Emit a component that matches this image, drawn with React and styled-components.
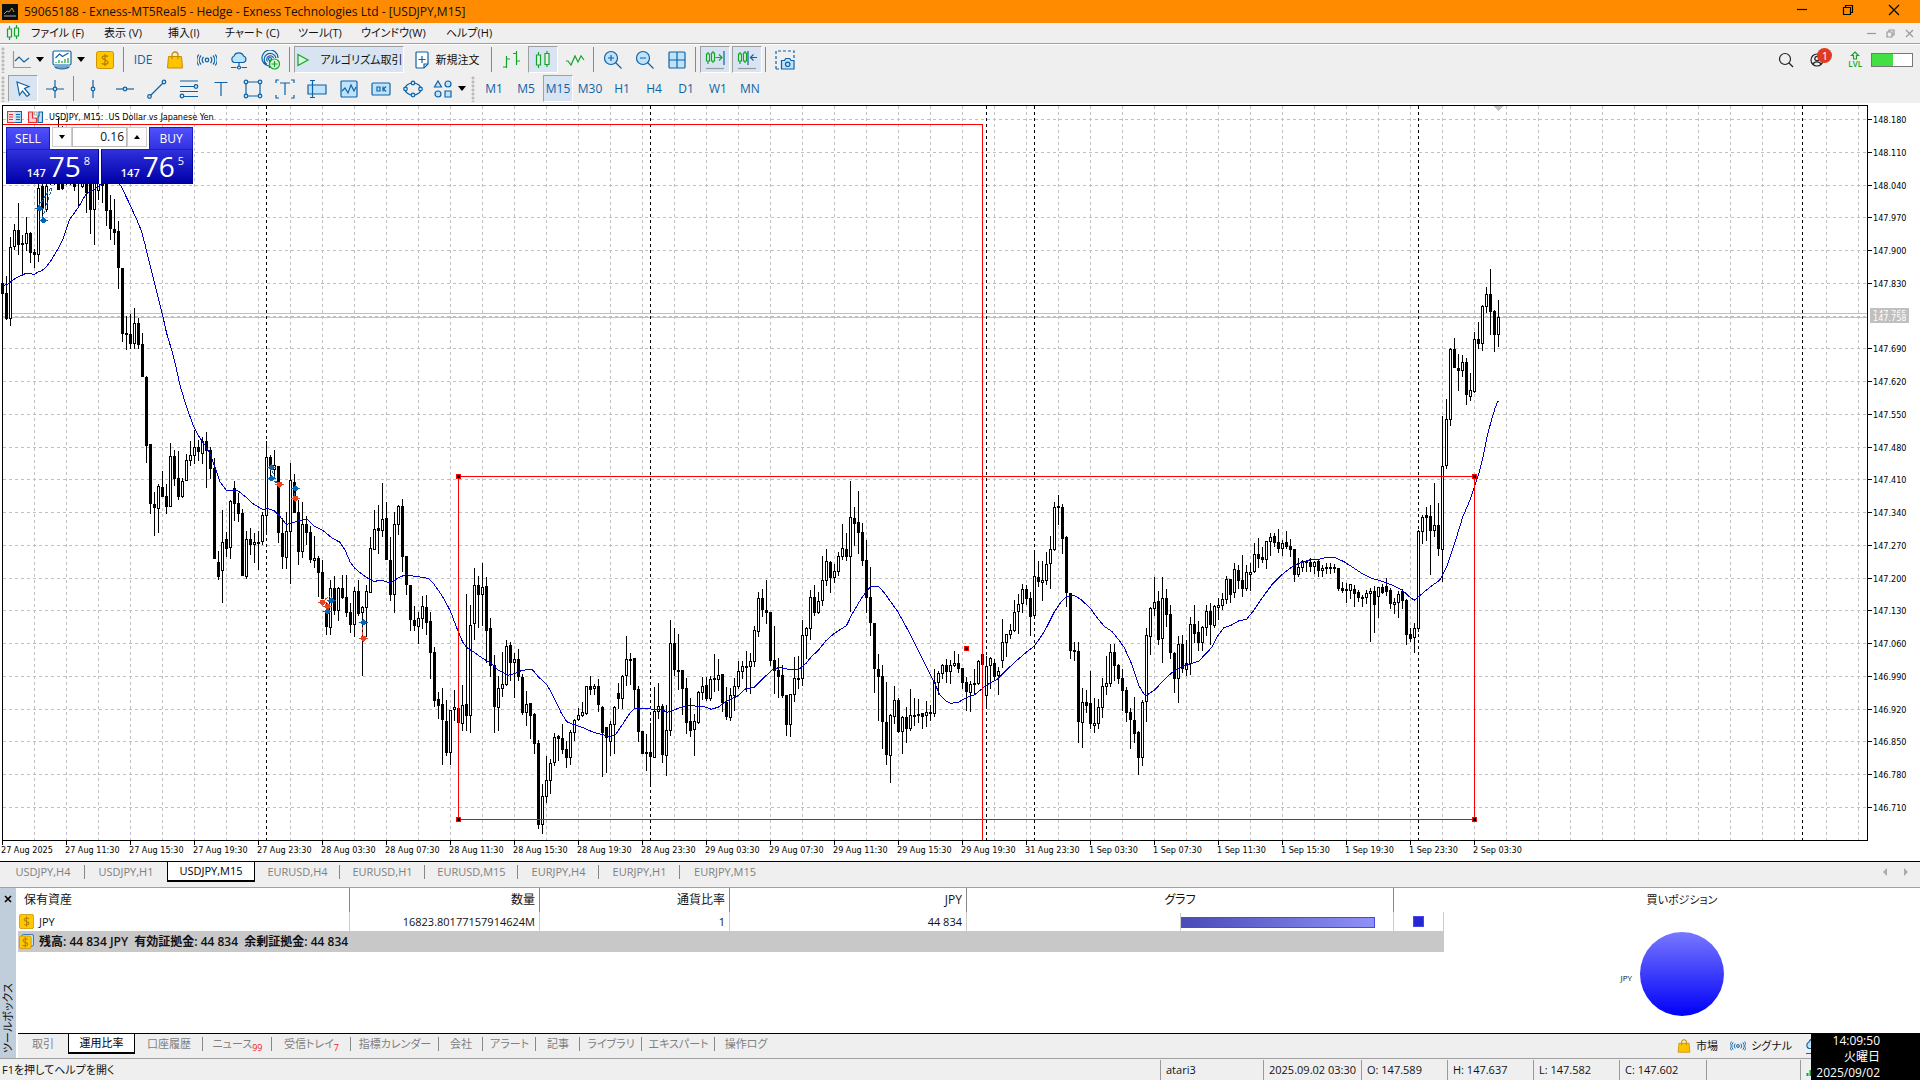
import { useState } from "react"
import styled, { createGlobalStyle, css } from "styled-components"

const BLUE = "#0f62a5"
const SKY = "#bfe3fb"
const GREEN = "#12a52b"

// ---------- chart data ----------
// every bar is high, open, close, low, in thirds of a unit under "base"; one bar each 4 units
const SERIES = [
    { from: 0, base: 180, bars: `292 310 340 340|288 340 415 418|173 415 202 437|132 200 151 208|69 151 193 223|166 189 193 285|112 191 160 212|157 160 217 248|207 216 223 263|-15 223 25 244|0 20 82 118|-20 88 18 95|-90 10 -60 14|-150 -60 0 14|-184 -100 27 28|-160 -20 25 28|-150 0 -80 12|-140 -80 0 12|-150 -10 18 32|-90 -40 10 80|-120 18 -50 23|-90 -50 38 98|-80 -30 88 160|-60 88 0 194|-60 30 -10 57|-60 -10 15 68|-30 -10 92 137|45 90 146 178|57 147 157 194|123 154 263 326|265 265 461 485|408 459 464 509|402 463 491 506|384 491 430 506|416 430 494 506|459 493 590 590|588 591 797 848|793 793 971 1001|938 973 983 1067|912 986 919 1058|873 921 950 950|912 948 980 1001|789 980 829 980|812 829 896 917|815 895 949 957|895 949 904 953|822 901 841 901|785 841 826 857|752 826 802 851|781 802 814 842|773 820 784 850|757 783 811 923|801 811 866 895|835 865 1136 1136|1113 1147 1190 1199|990 1171 1087 1268|1056 1077 1106 1128|960 1103 964 1136|903 925 970 1020|940 969 1000 1025|988 1000 1187 1187|1053 1190 1078 1196|1045 1077 1094 1124|1061 1094 1087 1148|1053 1086 1088 1169|997 1085 1006 1094|783 1006 832 1060|826 832 862 900|810 868 856 890|858 859 1058 1088|1014 1060 1130 1166|996 1132 1054 1166|850 1054 901 1211|882 906 997 997|960 997 1115 1154|966 1115 1033 1133|1008 1033 1058 1094|1040 1057 1139 1148|1068 1141 1136 1162|1128 1135 1178 1250|1142 1176 1256 1256|1270 1300 1340 1364|1200 1343 1225 1364|1190 1225 1292 1302|1222 1290 1225 1320|1186 1225 1253 1256|1185 1252 1298 1308|1270 1298 1334 1358|1221 1334 1234 1370|1200 1234 1301 1307|1278 1298 1282 1485|1215 1283 1234 1370|1072 1238 1105 1238|990 1108 1048 1108|975 1045 1052 1121|909 1052 1018 1070|966 1015 1139 1139|1072 1141 1244 1260|996 1244 1033 1296|975 1033 979 1064|957 979 1130 1175|1128 1128 1214 1242|1215 1215 1319 1352|1279 1320 1337 1352|1297 1340 1315 1389|1249 1315 1279 1344|1246 1282 1328 1364|1297 1324 1418 1496|1401 1416 1560 1580|1536 1558 1577 1615` },
    { from: 110, base: 460, bars: `685 733 779 912|720 783 878 885|751 878 751 912|690 748 742 782|715 744 788 790|676 791 736 812|402 732 767 812|435 767 496 818|324 490 376 537|348 376 402 503|309 404 382 495|351 378 512 606|474 504 617 650|585 616 740 818|648 742 685 812|577 685 673 708|541 673 559 675|546 556 608 662|579 608 598 713|567 598 650 662|642 652 758 762|693 758 733 795|729 730 765 834|759 763 849 879|840 850 1094 1106|973 1094 1009 1121|888 1009 961 1028|897 961 910 1001|819 907 832 917|825 829 836 902|793 836 868 879|843 867 893 921|810 892 817 912|779 817 782 840|745 778 766 780|728 767 757 770|678 760 679 762|648 679 688 703|672 686 679 704|657 679 734 753|740 741 818 948|802 802 833 938|784 845 793 887|738 793 742 881|670 699 716 746|646 716 649 746|528 646 598 676|579 598 602 672|594 595 688 745|678 688 814 843|813 813 880 881|823 876 878 930|790 877 889 977|682 892 754 892|669 754 739 775|733 739 884 908|736 886 811 945|480 811 550 825|504 550 629 645|522 630 632 688|631 631 686 762|656 685 788 819|714 784 811 830|763 808 784 885|693 788 697 790|651 697 679 717|651 676 716 720|648 716 658 722|582 655 658 693|598 658 646 690|643 643 727 754|681 726 769 777|684 773 706 780|654 706 679 750|604 679 634 684|603 634 619 656|574 619 622 695|580 619 604 699|499 605 511 618|396 513 415 528|388 415 448 468|360 450 457 489|456 458 602 615|499 600 631 699|594 631 649 712|615 646 706 712|705 705 794 825|702 794 703 828|591 703 655 724|589 655 657 684|480 656 526 675|501 526 505 594|390 506 412 537|375 412 458 465|396 458 424 459|289 422 361 437|267 361 304 375|304 306 352 398|312 352 334 366|276 334 290 345|192 290 265 297|219 268 289 302|63 290 172 453|141 175 191 255|93 187 218 280|189 217 300 315|240 301 412 456|321 412 488 525|490 490 626 696|582 628 649 780|615 649 785 864|667 787 884 912|762 886 766 966|678 769 721 789|714 720 815 818|768 815 772 879|742 772 806 846|687 806 766 812|714 766 768 795|717 763 767 788|759 760 770 806|723 767 757 800|735 758 761 782|627 761 667 768|633 668 640 702|612 640 616 656|598 616 635 668|600 635 616 669|573 616 610 620|582 610 626 638|625 625 668 684|652 667 695 750|663 697 673 753|627 670 673 703|600 671 604 673|582 583 613 613|588 706 619 741|592 617 595 684|598 610 648 662|621 647 634 702|477 601 547 621|522 547 523 588|492 523 511 535|421 511 457 513|402 454 433 520|373 430 388 457|375 387 416 434|397 415 469 525|280 466 349 468|303 351 365 378|303 368 361 420|276 361 313 372|228 310 268 384|126 268 142 272|105 140 143 194|132 142 235 280|228 232 398 440|400 400 571 594|546 571 574 600|546 574 785 846|684 787 727 861|690 727 737 758|633 730 791 804|714 796 790 816|718 790 742 804|654 742 679 771|589 679 671 703|552 671 577 678|552 577 616 662|612 616 656 670|627 655 692 750|682 692 758 785|744 757 779 864|711 781 821 846|813 816 892 942|720 892 727 915|504 724 526 785|441 529 445 582|351 445 427 465|393 423 538 552|351 535 415 606|387 415 463 498|435 463 577 594|578 580 655 696|528 655 553 726|525 553 626 636|541 628 610 645|471 610 493 644|435 493 521 546|483 517 547 570|498 547 502 570|435 501 454 526|430 454 494 552|435 496 439 501|414 442 436 478|399 436 418 448|349 418 358 430|357 358 402 426|309 398 328 412|316 330 360 384|285 360 386 408|316 386 337 392|309 343 337 392|249 334 283 336|234 283 296 321|261 292 299 306|243 299 245 326|220 245 233 285|219 229 248 258|207 247 265 278|240 265 250 285|213 247 260 264|237 259 269 290|268 268 343 363|294 343 322 350|300 322 304 335|300 304 308 333|294 306 320 334|304 320 307 340|300 304 332 348|315 331 325 348|311 323 326 340|311 323 326 340|314 323 326 338|324 324 386 390|366 385 391 396|370 388 392 426|373 391 374 414|375 388 400 438|390 398 412 424|406 411 413 438|391 412 400 431|384 400 394 543|378 394 434 516|381 409 382 471|372 382 398 399|354 378 394 406|385 391 431 444|414 433 427 460|394 428 403 471|387 394 422 444|417 420 524 552|504 522 536 544|489 532 506 576|211 506 214 514|165 214 172 249|141 166 172 242|135 168 212 342|69 212 196 230|129 196 266 285` },
    { from: 360, base: 100, bars: `950 1348 1099 1445|897 1096 958 1106|746 958 748 977|714 748 803 803|762 804 812 872|765 812 787 830|774 787 884 914|820 890 871 900|697 875 718 878|666 717 731 744|615 731 619 752|561 620 583 638|507 583 635 702|630 633 704 755|600 704 652 738` },
]

const CANDLES = SERIES.flatMap(({ from, base, bars }) =>
    bars.split("|").map((bar, i) => {
        const [high, open, close, low] = bar.split(" ").map((v) => Math.floor(base + Number(v) / 3))
        return { x: 2 + 4 * (from + i), high, open, close, low }
    })
)

// moving average, same idea: origin, horizontal scale, then x,y pairs
const AVERAGE = [
    { x: 0, y: 180, k: 3, pts: "10,317 22,313 35,303 50,293 65,286 78,280 103,283 115,276 127,271 140,259 152,243 163,225 175,205 187,182 197,152 207,122 215,110 235,82 258,42 280,30 295,20 315,0 335,-10 350,0 364,20 388,70 412,123 425,155 436,197 446,240 460,295 487,402 500,460 515,510 530,570 541,620 560,682 580,737 595,767 618,800 632,825 645,862 660,905 679,931 712,931 740,953 760,972 787,988 805,986 823,992 840,1010 859,1033 880,1028 900,1021 921,1018 945,1040 967,1050 995,1073 1020,1087 1035,1110 1050,1145 1065,1165 1085,1182 1104,1195 1122,1204 1145,1201 1172,1209 1195,1193 1218,1184 1240,1188 1285,1195 1300,1210" },
    { x: 440, y: 460, k: 2.8, pts: "0,398 10,415 29,453 51,515 63,545 74,562 96,577 119,595 141,608 160,628 190,646 208,641 230,631 258,628 275,650 300,675 320,715 340,760 355,785 375,794 400,803 430,817 455,824 475,830 490,826 510,795 530,762 545,746 590,747 620,748 635,757 660,748 690,736 740,740 760,748 780,741 800,725 835,707 855,687 880,682 905,655 930,630 950,622 975,628 1005,628 1025,610 1040,590 1060,570 1080,543 1104,520 1138,497 1155,460 1180,415 1205,380 1228,379 1245,400 1283,457 1310,510 1345,585 1385,670 1400,705 1415,722 1430,730 1452,727" },
    { x: 960, y: 460, k: 2.8, pts: "0,724 20,712 40,705 75,675 105,657 130,630 158,602 190,573 208,558 230,525 245,497 262,460 280,430 298,410 320,406 340,420 365,445 385,475 405,500 425,514 445,540 460,563 480,610 500,675 515,702 522,706 545,690 575,655 600,632 625,618 668,604 685,585 705,562 720,530 738,504 760,495 780,483 803,477 820,455 845,415 875,372 900,345 935,316 960,306 985,298 1005,298 1028,292 1052,294 1075,305 1100,322 1125,340 1150,354 1170,360 1205,373 1238,390 1255,407 1272,421 1295,400 1320,378 1343,361 1362,322 1385,250 1408,170 1430,115" },
    { x: 1410, y: 100, k: 3, pts: "190,1170 208,1115 217,1080 230,1015 243,965 255,925 262,907 266,903" },
]
const AVERAGE_POINTS = AVERAGE.map(({ x, y, k, pts }) =>
    pts.split(" ").map((p) => {
        const [px, py] = p.split(",").map(Number)
        return `${x + px / k},${y + py / 3}`
    }).join(" ")
).join(" ")

const PRICES = Array.from({ length: 22 }, (_, i) => ({
    y: Math.round(119 + i * 32.76),
    label: (148.18 - i * 0.07).toFixed(3),
}))
const TIMES = ["27 Aug 2025", "27 Aug 11:30", "27 Aug 15:30", "27 Aug 19:30", "27 Aug 23:30", "28 Aug 03:30", "28 Aug 07:30", "28 Aug 11:30", "28 Aug 15:30", "28 Aug 19:30", "28 Aug 23:30", "29 Aug 03:30", "29 Aug 07:30", "29 Aug 11:30", "29 Aug 15:30", "29 Aug 19:30", "31 Aug 23:30", "1 Sep 03:30", "1 Sep 07:30", "1 Sep 11:30", "1 Sep 15:30", "1 Sep 19:30", "1 Sep 23:30", "2 Sep 03:30"]
const DAY_BREAKS = [266, 650, 986, 1034, 1418, 1802]
const HANDLES = [[458, 476], [1474, 476], [458, 819], [1474, 819], [966, 648]]
const DEALS = [[38, 208, "buy"], [42, 220, "buy"], [270, 467, "buy"], [270, 478, "buy"], [278, 484, "sell"], [294, 488, "buy"], [294, 498, "sell"], [321, 602, "sell"], [326, 606, "sell"], [326, 611, "buy"], [330, 600, "buy"], [362, 622, "buy"], [362, 638, "sell"]]
const DEAL_LINES = [[38, 207, 52, 186, "buy"], [42, 219, 52, 188, "buy"], [270, 467, 278, 484, "buy"], [270, 478, 278, 484, "buy"], [294, 488, 294, 498, "buy"], [321, 602, 330, 596, "sell"], [326, 606, 330, 598, "sell"], [362, 622, 362, 638, "sell"]]

const Chart = () => (
    <ChartSvg viewBox="0 103 1920 758" shapeRendering="crispEdges" role="img" aria-label="USDJPY M15">
        <g stroke="#c0c0c0" strokeDasharray="3 3">
            {PRICES.map((p) => <path key={p.y} d={`M3 ${p.y}.5H1867`} />)}
            {Array.from({ length: 58 }, (_, i) => <path key={i} d={`M${34 + i * 32}.5 106V840`} />)}
        </g>
        <path d="M3 313.5H1867M3 317.5H1867" stroke="#c0c0c0" />
        <g stroke="#000" strokeDasharray="3 3">
            {DAY_BREAKS.map((x) => <path key={x} d={`M${x}.5 106V840`} />)}
        </g>
        {CANDLES.map(({ x, high, open, close, low }) => (
            <g key={x} stroke="#000">
                <path d={`M${x}.5 ${high}V${low + 1}`} />
                {open > close
                    ? <rect x={x - 0.5} y={close + 0.5} width="2" height={Math.max(1, open - close)} fill="#fff" />
                    : <rect x={x - 0.5} y={open + 0.5} width="2" height={Math.max(1, close - open)} fill="#000" />}
            </g>
        ))}
        {DEAL_LINES.map(([x1, y1, x2, y2, kind], i) => (
            <path key={i} d={`M${x1} ${y1}L${x2} ${y2}`} stroke={kind === "buy" ? "#0a64b4" : "#e4461f"} strokeDasharray="3 2" />
        ))}
        <polyline points={AVERAGE_POINTS} fill="none" stroke="#0000c8" />
        <path d="M3 124.5H982.5V840M458.5 476.5H1474.5V819.5H458.5Z" fill="none" stroke="#f00" />
        {HANDLES.map(([x, y]) => <rect key={`${x}-${y}`} x={x - 1.5} y={y - 1.5} width="4" height="4" fill="#000" stroke="#f00" />)}
        {DEALS.map(([x, y, kind], i) => kind === "buy"
            ? <path key={i} d={`M${x - 3} ${y}h2v-1h1v-1h1v-1h1v1h1v1h1v1h2v1h-2v1h-1v1h-3v-1h-1v-1h-2z`} fill="#0a64b4" />
            : <path key={i} d={`M${x - 3} ${y}h2v-2h5v2h2v1h-2v1h-1v1h-1v1h-1v-1h-1v-1h-1v-1h-2z`} fill="#e4461f" />)}
        <path d="M1493 106h10l-5 5z" fill="#c0c0c0" />
        <path d="M2.5 840V105.5H1867.5V840.5H2" fill="none" stroke="#000" />
        <AxisText>
            {PRICES.map((p) => p.label !== "147.760" && (
                <g key={p.label}>
                    <path d={`M1868 ${p.y}.5h4`} stroke="#000" />
                    <text x="1873" y={p.y + 4}>{p.label}</text>
                </g>
            ))}
            {TIMES.map((t, i) => (
                <g key={t}>
                    <path d={`M${2 + i * 64}.5 841v4`} stroke="#000" />
                    <text x={1 + i * 64} y="853">{t}</text>
                </g>
            ))}
            <rect x="1870" y="308" width="39" height="15" fill="#c0c0c0" />
            <text x="1873" y="317" fill="#fff">147.765</text>
            <rect x="1870" y="313" width="39" height="10" fill="#c0c0c0" />
            <text x="1873" y="321" fill="#fff">147.758</text>
        </AxisText>
    </ChartSvg>
)

// ---------- icons ----------
const Icon = ({ w = 20, h = 20, c = BLUE, children }) => (
    <svg width={w} height={h} viewBox={`0 0 ${w} ${h}`} fill="none" stroke={c} strokeWidth="1.2" aria-hidden="true">{children}</svg>
)
const Dot = ({ x, y }) => <circle cx={x} cy={y} r="1.8" fill={SKY} />
const Caret = () => <Icon w={8} h={5} c="none"><path d="M0 0h8L4 5z" fill="#000" /></Icon>
const BagIcon = ({ s = 18 }) => (
    <svg width={s} height={s} viewBox="0 0 18 18" fill="#ffc400" stroke="#c88c00" aria-hidden="true">
        <path d="M2.500 5.500h13l1 11.500h-15z" /><path d="M6 8V4a3 3 0 0 1 6 0v4" fill="none" strokeWidth="1.300" />
    </svg>
)
const SignalIcon = ({ s = 20 }) => (
    <svg width={s} height={s} viewBox="0 0 20 20" fill="none" stroke={BLUE} strokeWidth="1.2" aria-hidden="true">
        <circle cx="10" cy="10" r="1.800" fill={SKY} />
        <path d="M6.500 7a4.500 4.500 0 0 0 0 6M13.500 7a4.500 4.500 0 0 1 0 6M4 5.500a7 7 0 0 0 0 9M16 5.500a7 7 0 0 1 0 9M1.800 4.500a9 9 0 0 0 0 11M18.200 4.500a9 9 0 0 1 0 11" />
    </svg>
)
const CloudIcon = () => (
    <Icon>
        <path d="M5 12.500a3.500 3.500 0 0 1 0-6.500 5 4.500 0 0 1 9.500 0 3.400 3.400 0 0 1 0 6.500z" fill={SKY} />
        <path d="M10 12.500v4M2 17.500h5.500M12.500 17.500h5.500" /><circle cx="10" cy="17.500" r="1.500" />
    </Icon>
)
const CoinIcon = ({ stack, s = 18 }) => (
    <svg width={s} height={s} viewBox="0 0 18 18" aria-hidden="true">
        {stack && <rect x="3.500" y=".5" width="14" height="14" rx="2" fill={SKY} stroke={BLUE} />}
        <rect x=".5" y={stack ? 2.5 : 0.5} width={stack ? 14 : 17} height={stack ? 15 : 17} rx="2" fill="#ffc800" stroke="#cf9400" />
        <path d="M12 5.500C11 4.500 6.200 4.200 6.200 6.800S12 8.600 12 11.200 7 13.600 5.800 12.300M9 3v12" transform={stack ? "translate(-1.500 1)" : undefined} fill="none" stroke="#b47d00" strokeWidth="1.300" />
    </svg>
)
const ZoomIcon = ({ plus }) => (
    <Icon><circle cx="8" cy="8" r="6.500" fill={SKY} /><path d={plus ? "M12.500 12.500l6 6M5 8h6M8 5v6" : "M12.500 12.500l6 6M5 8h6"} /></Icon>
)
const candlesArt = <><path d="M5.500 2v16M14 1v16" /><path d="M3.500 5h4v10h-4zM12 3.500h4v11h-4z" fill="#efefef" /></>

const ROW_ONE = [
    { id: "line", wide: true, art: <Icon c="#9a9a9a"><path d="M2.500 1v16.500H20" /><path d="M4 11l4-4 5 5 5-4" stroke={BLUE} /></Icon> },
    { id: "indicators", wide: true, art: <Icon><rect x="1" y="1" width="18" height="14" rx="1.500" fill="#fff" /><path d="M3 17c2 2.500 12 2.500 14 0z" fill={SKY} /><path d="M3.500 8l4-4 3 2.500 6-3.500" /><path d="M4 13v-1M7 13v-3M10 13v-2M13 13v-4M16 13V8" stroke={GREEN} /></Icon> },
    { id: "coin", art: <CoinIcon /> },
    { sep: 1 },
    { id: "IDE", text: "IDE" },
    { id: "market", art: <BagIcon /> },
    { id: "signals", art: <SignalIcon /> },
    { id: "vps", art: <CloudIcon /> },
    { id: "copy", art: <Icon><path d="M8.500 9v9M13.700 14.500A8 8 0 1 1 17 8M6 14.500A6 6 0 1 1 15 8M6.500 11.500A3.500 3.500 0 1 1 12.500 8" /><circle cx="9" cy="9" r="1.500" fill={SKY} /><circle cx="13.500" cy="14" r="5" fill="#d8f5d8" stroke={GREEN} /><path d="M10.500 14h6M13.500 11v6" stroke={GREEN} /></Icon> },
    { sep: 1 },
    { id: "algo", width: 110, gap: 11, on: true, label: "アルゴリズム取引", art: <Icon w={14} h={14} c={GREEN}><path d="M2 1.500v11l10-5.500z" fill="#d8f8d8" /></Icon> },
    { id: "order", width: 82, gap: 7, label: "新規注文", art: <Icon w={14} h={18}><path d="M2 1h10a1 1 0 0 1 1 1v11l-4 4H2a1 1 0 0 1-1-1V2a1 1 0 0 1 1-1z" fill="#fff" /><path d="M7 5v7M3.500 8.500h7M9 17v-4h4" /></Icon> },
    { sep: 1 },
    { id: "bars", art: <Icon c={GREEN}><path d="M5.500 6v12M2 17h3.500M5.500 9H9M15.500 1v14M12 3.500h3.500M15.500 11H19" /></Icon> },
    { id: "candles", on: true, art: <Icon c={GREEN}>{candlesArt}</Icon> },
    { id: "zigzag", art: <Icon c={GREEN}><path d="M1 11h2l3 4 4-9 3 6 3-6 3 4" /></Icon> },
    { sep: 1 },
    { id: "in", art: <ZoomIcon plus /> },
    { id: "out", art: <ZoomIcon /> },
    { id: "tile", art: <Icon><rect x="2" y="2" width="16" height="16" rx="1" fill={SKY} /><path d="M10 2v16M2 10h16" /></Icon> },
    { sep: 1 },
    { id: "scroll", on: true, art: <Icon c={GREEN}><path d="M3 2v12M8 1v12M10.500 7.500h6M14 4.500l3 3-3 3" /><path d="M1.500 4h3v7h-3zM6.500 3h3v8h-3z" fill="#e0f0e0" /><path d="M19 1v14" stroke={BLUE} /><path d="M1 18.500h18" stroke="#999" /></Icon> },
    { id: "shift", on: true, art: <Icon c={GREEN}><path d="M3 2v12M8 1v12" /><path d="M1.500 4h3v7h-3zM6.500 3h3v8h-3z" fill="#e0f0e0" /><path d="M11 1v14M13.500 7.500H20M16.500 4.500l-3 3 3 3" stroke={BLUE} /><path d="M1 18.500h18" stroke="#999" /></Icon> },
    { sep: 1 },
    { id: "camera", art: <Icon><path d="M1 19V1h18v7M1 19h4" strokeDasharray="3 2" /><path d="M6.500 10.500h3l1.200-2h4l1.200 2H19v8.500H6.500z" fill={SKY} /><circle cx="12.700" cy="14.300" r="2.200" /></Icon> },
]

const ROW_TWO = [
    { id: "cursor", on: true, art: <Icon><path d="M4 3l12 4.500-4.500 2 5 6-2.500 2-4.500-5.500L6.500 16z" fill="#fff" /></Icon> },
    { id: "cross", art: <Icon><path d="M10 1v18M1 10h18" /><Dot x={10} y={10} /></Icon> },
    { sep: 1 },
    { id: "vline", art: <Icon><path d="M10 1v18" /><Dot x={10} y={10} /></Icon> },
    { id: "hline", art: <Icon><path d="M1 10h18" /><Dot x={10} y={10} /></Icon> },
    { id: "trend", art: <Icon><path d="M3 17L17 3" /><Dot x={2.5} y={17.5} /><Dot x={17} y={3} /></Icon> },
    { id: "fibo", art: <Icon><path d="M1 2h18M1 7.500h18M1 12.500h18M1 17.500h18" /><Dot x={17} y={7.5} /><Dot x={3} y={17} /></Icon> },
    { id: "text", art: <Icon><path d="M3.500 3.500h13M10 3.500V17" /></Icon> },
    { id: "rect", art: <Icon><path d="M3 3h14v14H3z" /><Dot x={3} y={3} /><Dot x={17} y={3} /><Dot x={3} y={17} /><Dot x={17} y={17} /></Icon> },
    { id: "label", art: <Icon><path d="M5 4h10M10 4v12M4 1H1v3M16 1h3v3M4 19H1v-3M16 19h3v-3" /></Icon> },
    { id: "edit", art: <Icon><path d="M1 6h18v9H1z" fill={SKY} /><path d="M5.500 2v16M3 1.500h5M3 18.500h5" /></Icon> },
    { id: "graph", art: <Icon><rect x="2" y="2" width="16" height="16" rx="1" fill={SKY} /><path d="M3 12l3-3 3 5 3-8 3 6 2-4" /></Icon> },
    { id: "button", art: <Icon><rect x="1" y="4" width="18" height="12" rx="1" fill={SKY} /><path d="M6 8h3v4H6zM12 7.500v5M15 7.500L12.500 10l2.500 2.500" /></Icon> },
    { id: "ellipse", art: <Icon><ellipse cx="10" cy="10" rx="8" ry="6" /><Dot x={2.5} y={10} /><Dot x={17.5} y={10} /><Dot x={10} y={4} /><Dot x={10} y={16} /></Icon> },
    { id: "shapes", wide: true, art: <Icon><g fill={SKY}><path d="M5 2L8.500 8h-7z" /><circle cx="15" cy="5" r="3" /><circle cx="5" cy="15" r="3" /><path d="M12 12h6v6h-6z" /></g></Icon> },
]
const FRAMES = ["M1", "M5", "M15", "M30", "H1", "H4", "D1", "W1", "MN"]

const MENUS = [["ファイル (F)", 73], ["表示 (V)", 64], ["挿入(I)", 57], ["チャート (C)", 73], ["ツール(T)", 63], ["ウインドウ(W)", 85], ["ヘルプ(H)", 68]]
const CHART_TABS = [["USDJPY,H4", 84], ["USDJPY,H1", 82], ["USDJPY,M15", 88], ["EURUSD,H4", 85], ["EURUSD,H1", 85], ["EURUSD,M15", 93], ["EURJPY,H4", 81], ["EURJPY,H1", 81], ["EURJPY,M15", 90]]
const BOX_TABS = [["取引", 50], ["運用比率", 67], ["口座履歴", 68], ["ニュース", 69, "99"], ["受信トレイ", 79, "7"], ["指標カレンダー", 88], ["会社", 44], ["アラート", 53], ["記事", 44], ["ライブラリ", 62], ["エキスパート", 73], ["操作ログ", 62]]

const Tools = ({ items }) => items.map((t, i) => t.sep
    ? <Divider key={i} />
    : (
        <Tool key={t.id} type="button" aria-label={t.label || t.id} $on={t.on} $gap={t.gap} $width={t.width || (t.wide ? 39 : 30)}>
            {t.art}{t.text}{t.wide && <Caret />}{t.label && <span>{t.label}</span>}
        </Tool>
    ))

const App = () => {
    const [frame, setFrame] = useState("M15")
    const [chartTab, setChartTab] = useState("USDJPY,M15")
    const [boxTab, setBoxTab] = useState("運用比率")
    const [lots, setLots] = useState("0.16")

    return <Page>
        <GlobalStyle />
        <TitleBar>
            <svg width="16" height="16" viewBox="0 0 16 16" aria-hidden="true"><path d="M0 0h16v16H0z" fill="#0b0f14" /><path d="M2 10l3-3 2 1 3-4 2 4" fill="none" stroke="#c9a227" /><path d="M2 12h12" stroke="#aaa" /></svg>
            <h1>59065188 - Exness-MT5Real5 - Hedge - Exness Technologies Ltd - [USDJPY,M15]</h1>
            <WindowButton type="button" aria-label="minimize"><Icon w={12} h={12} c="#000"><path d="M1 5.500h10" /></Icon></WindowButton>
            <WindowButton type="button" aria-label="restore"><Icon w={12} h={12} c="#000"><path d="M1.500 3.500h7v7h-7zM3.500 3V1.500h7v7H9" /></Icon></WindowButton>
            <WindowButton type="button" aria-label="close"><Icon w={12} h={12} c="#000"><path d="M1 1l10 10M11 1L1 11" /></Icon></WindowButton>
        </TitleBar>
        <MenuBar>
            <Icon w={14} h={16} c={GREEN}><path d="M3.500 1v14M10.500 0v14" /><path d="M1.500 4h4v8h-4zM8.500 3h4v8h-4z" fill="#efefef" /></Icon>
            {MENUS.map(([name, w]) => <MenuButton key={name} type="button" $width={w}>{name}</MenuButton>)}
            <ChildButtons>
                <Icon w={9} h={9} c="#999"><path d="M0 4.500h9" /></Icon>
                <Icon w={9} h={9} c="#999"><path d="M1 3h5v5H1zM3 3V1h5v5H6" /></Icon>
                <Icon w={9} h={9} c="#999"><path d="M1 1l7 7M8 1L1 8" /></Icon>
            </ChildButtons>
        </MenuBar>
        <ToolBars>
            <ToolRow>
                <Grip /><Tools items={ROW_ONE} />
                <RightTools>
                    <Icon w={16} h={16} c="#222"><circle cx="7" cy="7" r="5.500" /><path d="M11 11l4 4" /></Icon>
                    <UserBadge>
                        <Icon w={14} h={14} c="#222"><circle cx="7" cy="7" r="6" /><circle cx="7" cy="5.500" r="2.200" /><path d="M3 11.500c1-3.500 7-3.500 8 0" /></Icon>
                        <Badge>1</Badge>
                    </UserBadge>
                    <Level><Icon w={10} h={9} c={GREEN}><path d="M5 1l3.500 3.500H6.500V8h-3V4.500h-2z" /></Icon>LVL</Level>
                    <Battery><i /></Battery>
                </RightTools>
            </ToolRow>
            <ToolRow>
                <Grip /><Tools items={ROW_TWO} /><Grip $mid />
                {FRAMES.map((f) => <Tool key={f} type="button" $width={30} $on={f === frame} onClick={() => setFrame(f)}>{f}</Tool>)}
            </ToolRow>
        </ToolBars>

        <ChartArea>
            <Chart />
            <ChartCaption>
                <Icon w={15} h={12} c="#d33"><path d="M7.500.5h-7v11h7M2 3.500h4M2 6h4M2 8.500h4" fill="#fde0e0" /><path d="M7.500.5h7v11h-7M9 3.500h4M9 6h4M9 8.500h4" stroke={BLUE} fill={SKY} /></Icon>
                <Icon w={15} h={12} c="#d33"><path d="M.5 1v10.500h8V7h-4V1z" fill="#fcc" /><path d="M10 5v6.500h4.500V1H11v4z" stroke={BLUE} fill={SKY} /><path d="M6 1h3v3H6z" stroke="#aaa" /></Icon>
                <span>USDJPY, M15:&nbsp; US Dollar vs Japanese Yen</span>
            </ChartCaption>
            <OneClick>
                <Side type="button">SELL</Side>
                <Lots>
                    <button type="button" aria-label="less"><Icon w={6} h={4} c="none"><path d="M0 0h6L3 4z" fill="#000" /></Icon></button>
                    <input aria-label="volume" value={lots} onChange={(e) => setLots(e.target.value)} />
                    <button type="button" aria-label="more"><Icon w={6} h={4} c="none"><path d="M0 4h6L3 0z" fill="#000" /></Icon></button>
                </Lots>
                <Side type="button">BUY</Side>
                <Quote type="button"><small>147</small><b>75</b><sup>8</sup></Quote>
                <Quote type="button" $right><small>147</small><b>76</b><sup>5</sup></Quote>
            </OneClick>
        </ChartArea>

        <ChartTabs>
            {CHART_TABS.map(([name, w], i) => (
                <Tab key={name} type="button" $width={w} $on={name === chartTab} $line={i !== 1 && i !== 8} onClick={() => setChartTab(name)}>{name}</Tab>
            ))}
            <Arrows><Icon w={4} h={8} c="none"><path d="M4 0v8L0 4z" fill="#aaa" /></Icon><Icon w={4} h={8} c="none"><path d="M0 0v8l4-4z" fill="#aaa" /></Icon></Arrows>
        </ChartTabs>

        <ToolBox>
            <SideBar><button type="button" aria-label="close toolbox"><Icon w={8} h={8} c="#000"><path d="M1 1l6 6M7 1L1 7" strokeWidth="1.600" /></Icon></button><span>ツールボックス</span></SideBar>
            <BoxMain>
                <BoxContent>
                    <Assets>
                        <colgroup><col width="332" /><col width="190" /><col width="190" /><col width="237" /><col width="427" /><col width="50" /></colgroup>
                        <thead>
                            <tr><th>保有資産</th><th>数量</th><th>通貨比率</th><th>JPY</th><th>グラフ</th><th aria-label="color" /></tr>
                        </thead>
                        <tbody>
                            <tr>
                                <td><Cell><CoinIcon s={15} />JPY</Cell></td>
                                <td>16823.80177157914624M</td><td>1</td><td>44 834</td>
                                <td><BarTrack><Bar /></BarTrack></td>
                                <td><Swatch /></td>
                            </tr>
                            <tr>
                                <td colSpan="6"><Cell><CoinIcon stack s={15} />残高: 44 834 JPY&nbsp; 有効証拠金: 44 834&nbsp; 余剰証拠金: 44 834</Cell></td>
                            </tr>
                        </tbody>
                    </Assets>
                    <Positions>
                        <h2>買いポジション</h2>
                        <Pie><span>JPY</span></Pie>
                    </Positions>
                </BoxContent>
                <BoxTabs>
                    {BOX_TABS.map(([name, w, count], i) => (
                        <Tab key={name} type="button" $width={w} $on={name === boxTab} $line={i > 1 && i < 11} onClick={() => setBoxTab(name)}>
                            {name}{count && <sub>{count}</sub>}
                        </Tab>
                    ))}
                    <Services>
                        <a href="#market"><BagIcon s={14} />市場</a>
                        <a href="#signals"><SignalIcon s={16} />シグナル</a>
                        <a href="#vps"><CloudIcon /></a>
                    </Services>
                </BoxTabs>
            </BoxMain>
        </ToolBox>

        <StatusBar>
            <p>F1を押してヘルプを開く</p>
            <Status $width={103}>atari3</Status>
            <Status $width={98}>2025.09.02 03:30</Status>
            <Status $width={86}>O: 147.589</Status>
            <Status $width={86}>H: 147.637</Status>
            <Status $width={86}>L: 147.582</Status>
            <Status $width={87}>C: 147.602</Status>
            <Status $width={94} />
            <Status $width={120}><Icon w={12} h={12} c={GREEN}><path d="M1.500 12V9M4.500 12V6M7.500 12V3M10.500 12V0" strokeWidth="2" /></Icon></Status>
        </StatusBar>
        <Clock><time>14:09:50</time><span>火曜日</span><time>2025/09/02</time></Clock>
    </Page>
}

const GlobalStyle = createGlobalStyle`
    * { box-sizing: border-box; }
    body { margin: 0; }
    button, input { font: inherit; color: inherit; font-feature-settings: inherit; }
`
const Page = styled.div`
    position: relative;
    display: flex;
    flex-direction: column;
    min-height: 100vh;
    background: #efefef;
    color: #111;
    font-family: "Open Sans", "Noto Sans CJK JP", sans-serif;
    font-size: 12px;
    line-height: 16px;
    font-feature-settings: "palt";
    svg { flex: none; }
`
const TitleBar = styled.header`
    display: flex;
    align-items: center;
    height: 23px;
    padding-left: 2px;
    background: #ff8c00;
    h1 { flex: 1; margin: 0 0 0 6px; font-size: 12px; font-weight: 400; }
`
const WindowButton = styled.button`
    width: 46px;
    height: 23px;
    padding: 0 6px 0 0;
    border: none;
    background: transparent;
`
const MenuBar = styled.nav`
    display: flex;
    align-items: center;
    height: 21px;
    padding-left: 6px;
    border-bottom: 1px solid #a0a0a0;
    font-size: 11px;
`
const MenuButton = styled.button`
    width: ${({ $width }) => $width}px;
    padding: 0 0 0 11px;
    border: none;
    background: transparent;
    text-align: left;
    white-space: nowrap;
`
const ChildButtons = styled.div`
    display: flex;
    gap: 10px;
    margin-left: auto;
    padding-right: 6px;
`
const ToolBars = styled.div`
    border-top: 1px solid #fff;
`
const ToolRow = styled.div`
    display: flex;
    align-items: center;
    height: 29px;
    color: ${BLUE};
`
const Grip = styled.i`
    width: ${({ $mid }) => ($mid ? 8 : 7)}px;
    height: 26px;
    background: radial-gradient(circle, #bbb 1px, transparent 2px) 0 0 / 6px 4px repeat-y;
`
const Divider = styled.i`
    width: 2px;
    height: 25px;
    margin: 0 2px;
    border-left: 1px solid #888;
`
const Tool = styled.button`
    display: flex;
    align-items: center;
    justify-content: center;
    gap: ${({ $gap = 5 }) => $gap}px;
    width: ${({ $width }) => $width}px;
    height: 27px;
    margin: 0 1px;
    padding: 0;
    border: 1px solid transparent;
    background: transparent;
    white-space: nowrap;
    ${({ $on }) => $on && css`
        background: #d8e4f2;
        border-color: #a0a0a0 #fff #fff #a0a0a0;
    `}
    span { color: #111; font-size: 11px; }
`
const RightTools = styled.div`
    display: flex;
    align-items: center;
    margin-left: auto;
    padding-right: 7px;
    gap: 16px;
`
const UserBadge = styled.div`
    position: relative;
    display: flex;
    width: 22px;
`
const Badge = styled.span`
    position: absolute;
    top: -5px;
    left: 7px;
    width: 15px;
    height: 15px;
    border-radius: 50%;
    background: #e03a20;
    color: #fff;
    font-size: 11px;
    line-height: 15px;
    text-align: center;
`
const Level = styled.div`
    display: flex;
    flex-direction: column;
    align-items: center;
    color: ${GREEN};
    font-size: 8px;
    font-weight: 600;
    line-height: 8px;
`
const Battery = styled.div`
    display: flex;
    width: 42px;
    height: 14px;
    margin-left: -7px;
    border: 1px solid #777;
    background: #fff;
    i { width: 52%; background: #42e042; }
`
const ChartArea = styled.section`
    position: relative;
    background: #fff;
    border-bottom: 1px solid #000;
`
const ChartSvg = styled.svg`
    display: block;
    width: 100%;
`
const AxisText = styled.g`
    font-family: "DejaVu Sans Condensed", "DejaVu Sans", sans-serif;
    font-size: 9px;
`
const ChartCaption = styled.div`
    position: absolute;
    top: 6px;
    left: 7px;
    display: flex;
    align-items: center;
    gap: 6px;
    font-family: "DejaVu Sans Condensed", "DejaVu Sans", sans-serif;
    font-size: 9px;
    color: #000;
`
const OneClick = styled.div`
    position: absolute;
    top: 24px;
    left: 6px;
    display: grid;
    grid-template-columns: 44px minmax(0, 1fr) 44px;
    width: 187px;
    background: #fff;
    color: #fff;
`
const Side = styled.button`
    height: 22px;
    padding: 0;
    border: 1px solid #1c1cc8;
    border-bottom: none;
    background: linear-gradient(#5050ff, #3232e0);
`
const Lots = styled.div`
    display: flex;
    height: 20px;
    margin: 0 2px;
    color: #111;
    button { display: flex; align-items: center; justify-content: center; width: 20px; padding: 0; border: 1px solid #ccc; background: #fcfcfc; }
    input { flex: 1; min-width: 0; padding: 0 2px; border: 1px solid #bbb; text-align: right; }
`
const Quote = styled.button`
    display: flex;
    align-items: flex-end;
    justify-content: flex-end;
    gap: 3px;
    grid-column: ${({ $right }) => ($right ? "2 / 4" : "1 / 3")};
    grid-row: 2;
    width: ${({ $right }) => ($right ? 92 : 93)}px;
    height: 35px;
    padding: 0 8px 3px 0;
    justify-self: ${({ $right }) => ($right ? "end" : "start")};
    border: 1px solid #0000a0;
    border-top-color: #2020c0;
    background: linear-gradient(#3030dc, #0000a8);
    small { font-size: 11px; line-height: 14px; font-weight: 600; }
    b { font-size: 28px; line-height: 27px; font-weight: 400; }
    sup { align-self: flex-start; font-size: 11px; line-height: 22px; }
`
const ChartTabs = styled.nav`
    display: flex;
    align-items: flex-start;
    height: 25px;
    padding-left: 1px;
    font-size: 11px;
`
const Tab = styled.button`
    position: relative;
    width: ${({ $width }) => $width}px;
    height: 20px;
    padding: 0;
    border: none;
    background: transparent;
    color: #808080;
    white-space: nowrap;
    ${({ $line }) => $line && css`
        background: linear-gradient(#888, #888) right 3px / 1px 14px no-repeat;
    `}
    ${({ $on }) => $on && css`
        background: #fff;
        border: solid #000;
        border-width: 0 1px 2px;
        color: #000;
    `}
    sub { color: #f02020; font-size: 9px; line-height: 9px; }
`
const Arrows = styled.div`
    display: flex;
    gap: 17px;
    margin-left: auto;
    padding: 6px 12px 0 0;
`
const ToolBox = styled.section`
    flex: 1;
    display: flex;
    border-top: 1px solid #a0a0a0;
    border-bottom: 1px solid #a0a0a0;
`
const SideBar = styled.aside`
    display: flex;
    flex-direction: column;
    align-items: center;
    justify-content: space-between;
    width: 16px;
    padding: 7px 0 5px;
    background: #c0cedc;
    font-size: 11px;
    button { display: flex; padding: 0; border: none; background: transparent; }
    span { writing-mode: vertical-rl; text-orientation: sideways; transform: rotate(180deg); }
`
const BoxMain = styled.div`
    flex: 1;
    display: flex;
    flex-direction: column;
    border-left: 2px solid #fff;
`
const BoxContent = styled.div`
    flex: 1;
    display: flex;
    background: #fff;
`
const Assets = styled.table`
    align-self: flex-start;
    width: 1426px;
    table-layout: fixed;
    border-collapse: separate;
    border-spacing: 0;
    th, td { padding: 0 4px; border-right: 1px solid #ccc; text-align: right; font-weight: 400; }
    th { height: 24px; border-color: #888; }
    th:first-child, td:first-child { text-align: left; }
    th:first-child { padding-left: 6px; }
    td:first-child { padding-left: 1px; }
    th:nth-child(5) { text-align: center; }
    th:last-child { border: none; }
    td { height: 19px; font-size: 11px; }
    td:nth-child(5) { padding: 0; }
    tr:last-child td[colspan] { height: 21px; border: none; background: #c8c8c8; font-size: 12px; font-weight: 600; }
`
const Cell = styled.span`
    display: flex;
    align-items: center;
    gap: 5px;
`
const BarTrack = styled.div`
    height: 18px;
    margin-left: 50%;
    padding: 4px 18px 3px 0;
    border-left: 1px solid #ccc;
`
const Bar = styled.div`
    height: 11px;
    border: 1px solid #4848f0;
    background: linear-gradient(90deg, #4a4ab8, #9090f8);
`
const Swatch = styled.div`
    width: 11px;
    height: 11px;
    margin: 0 auto;
    border: 1px solid #4848f0;
    background: #2626d4;
`
const Positions = styled.div`
    flex: 1;
    display: flex;
    flex-direction: column;
    align-items: center;
    h2 { margin: 4px 0 0; font-size: 11px; font-weight: 400; }
`
const Pie = styled.div`
    position: relative;
    width: 84px;
    height: 84px;
    margin-top: 24px;
    border-radius: 50%;
    background: linear-gradient(#7878ff, #0000f8);
    span { position: absolute; right: 92px; top: 40px; font-size: 8px; line-height: 12px; }
`
const BoxTabs = styled.nav`
    display: flex;
    height: 25px;
    border-top: 1px solid #000;
    font-size: 11px;
`
const Services = styled.div`
    display: flex;
    align-items: center;
    gap: 12px;
    margin-left: auto;
    padding-right: 96px;
    a { display: flex; align-items: center; gap: 5px; color: #111; text-decoration: none; }
`
const StatusBar = styled.footer`
    display: flex;
    align-items: center;
    height: 21px;
    font-size: 11px;
    p { flex: 1; margin: 0; padding-left: 2px; }
`
const Status = styled.div`
    display: flex;
    align-items: center;
    width: ${({ $width }) => $width}px;
    height: 20px;
    padding-left: 5px;
    border-left: 1px solid #999;
    white-space: nowrap;
`
const Clock = styled.div`
    position: absolute;
    right: 0;
    bottom: 0;
    width: 109px;
    height: 47px;
    padding-right: 40px;
    background: #000;
    color: #fff;
    text-align: right;
    time, span { display: block; }
`
export default App
